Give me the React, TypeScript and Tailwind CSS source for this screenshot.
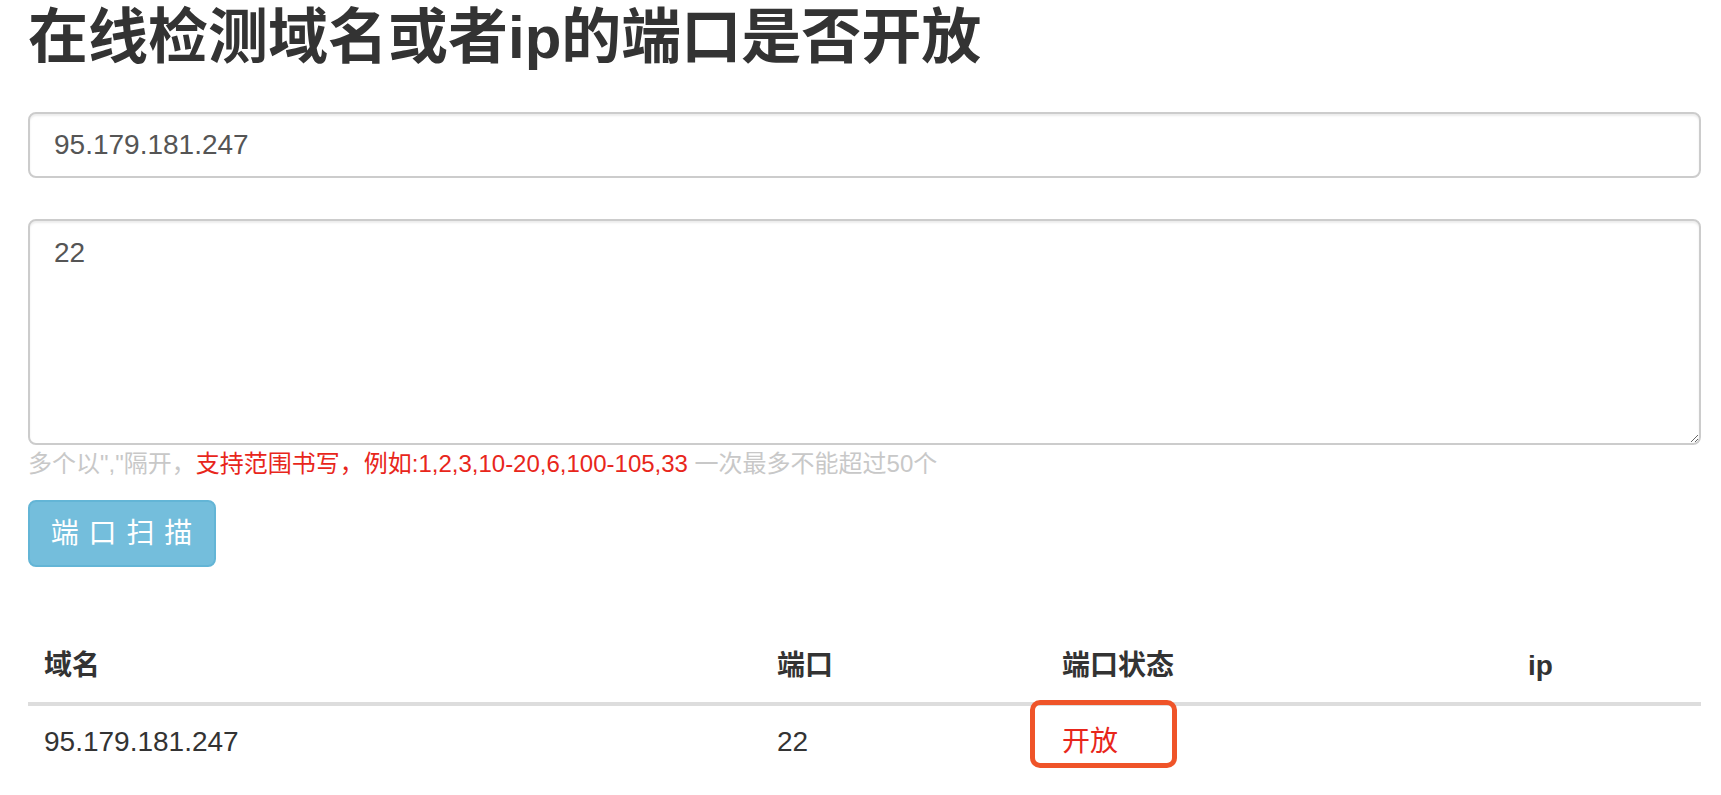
export default function App() {
  const font = { fontFamily: '"Liberation Sans", "Noto Sans CJK SC", sans-serif' };
  return (
    <div className="min-h-screen bg-white text-[#333]" style={font}>
      <div className="pl-[28px] pr-[20px]">
        <h1 className="mt-[5px] text-[60px] leading-[66px] font-semibold text-[#333]">
          在线检测域名或者ip的端口是否开放
        </h1>

        <input
          defaultValue="95.179.181.247"
          className="mt-[41px] block w-full h-[66px] px-[24px] text-[28px] text-[#555] border-2 border-[#ccc] rounded-[8px] shadow-[inset_0_2px_2px_rgba(0,0,0,0.075)] outline-none"
        />

        <textarea
          defaultValue="22"
          className="mt-[41px] block w-full h-[226px] px-[24px] py-[12px] text-[28px] leading-[40px] text-[#555] border-2 border-[#ccc] rounded-[8px] shadow-[inset_0_2px_2px_rgba(0,0,0,0.075)] outline-none"
        />

        <p className="mt-[2px] text-[24px] leading-[34px] text-[#c8c8c8]">
          多个以","隔开，
          <span className="text-[#e8261b]">支持范围书写，例如:1,2,3,10-20,6,100-105,33</span> 一次最多不能超过50个
        </p>

        <button className="mt-[19px] w-[188px] h-[67px] rounded-[8px] bg-[#74bedc] border-2 border-[#63b5d6] text-white text-[28px] tracking-[1px]">
          端 口 扫 描
        </button>

        <table className="mt-[63px] w-full table-fixed border-collapse text-[28px] leading-[40px]">
          <colgroup>
            <col className="w-[733px]" />
            <col className="w-[285px]" />
            <col className="w-[466px]" />
            <col />
          </colgroup>
          <thead>
            <tr className="border-b-4 border-[#ddd]">
              <th className="p-[16px] text-left font-bold">域名</th>
              <th className="p-[16px] text-left font-bold">端口</th>
              <th className="p-[16px] text-left font-bold">端口状态</th>
              <th className="p-[16px] text-left font-bold">ip</th>
            </tr>
          </thead>
          <tbody>
            <tr>
              <td className="p-[16px]">95.179.181.247</td>
              <td className="p-[16px]">22</td>
              <td className="p-[16px] relative text-[#e8261b]">
                开放
                <span className="absolute left-[-16px] top-[-6px] w-[147px] h-[68px] border-[5px] border-[#ef5429] rounded-[10px]" />
              </td>
              <td className="p-[16px]"></td>
            </tr>
          </tbody>
        </table>
      </div>
    </div>
  );
}
